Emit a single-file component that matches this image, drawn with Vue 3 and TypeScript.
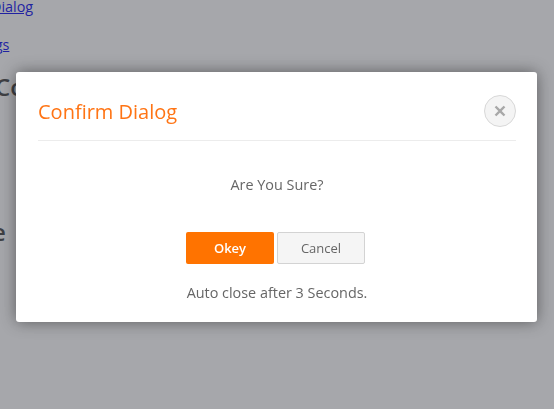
<script setup lang="ts">
const title = 'Confirm Dialog'
const message = 'Are You Sure?'
const note = 'Auto close after 3 Seconds.'
</script>

<template>
  <div class="page">
    <a class="link first" href="#">Confirm Dialog</a>
    <a class="link second" href="#">Settings</a>
    <h2 class="heading h-one">Confirm</h2>
    <h2 class="heading h-two">Dialogue</h2>
  </div>
  <div class="overlay">
    <section class="dialog">
      <header class="head">
        <h3 class="title">{{ title }}</h3>
        <button class="close" type="button" aria-label="Close">
          <svg width="14" height="14" viewBox="0 0 14 14">
            <path d="M2.5 2.5 11.5 11.5M11.5 2.5 2.5 11.5" stroke="#a8a8a8" stroke-width="2.4" fill="none" />
          </svg>
        </button>
      </header>
      <p class="message">{{ message }}</p>
      <div class="actions">
        <button class="btn okey" type="button">Okey</button>
        <button class="btn cancel" type="button">Cancel</button>
      </div>
      <p class="note">{{ note }}</p>
    </section>
  </div>
</template>

<style>
html, body { margin: 0; padding: 0; background: #fff; overflow: hidden; }
</style>

<style scoped>
.page {
  height: 409px;
  overflow: hidden;
  display: flex;
  flex-direction: column;
  align-items: flex-start;
  font-family: "Open Sans", sans-serif;
}
.link {
  font-size: 14.4px;
  line-height: 19px;
  color: #0000ee;
  text-decoration: underline;
}
.first { margin: -3px 0 0 -67px; }
.second { margin: 19px 0 0 -44px; }
.heading {
  margin: 0;
  font-size: 24px;
  font-weight: 600;
  line-height: 32px;
  color: #3a3a3a;
}
.h-one { margin: 17px 0 0 -5px; }
.h-two { margin: 113px 0 0 -96px; }
.overlay {
  position: fixed;
  inset: 0;
  background: rgba(70, 72, 80, 0.48);
  display: flex;
  justify-content: flex-start;
  align-items: flex-start;
  padding: 72px 0 0 16px;
  font-family: "Open Sans", sans-serif;
}
.dialog {
  box-sizing: border-box;
  width: 521px;
  height: 250px;
  padding: 0 21px 0 22px;
  background: #fff;
  border-radius: 3px;
  box-shadow: 0 0 16px rgba(0, 0, 0, 0.45);
  display: flex;
  flex-direction: column;
  align-items: center;
}
.head {
  box-sizing: border-box;
  align-self: stretch;
  height: 69px;
  border-bottom: 1px solid #ececec;
  display: flex;
  justify-content: space-between;
  align-items: center;
  padding-top: 19px;
  padding-bottom: 9px;
}
.title {
  margin: 0;
  font-size: 20px;
  font-weight: 400;
  color: #ff7414;
}
.close {
  box-sizing: border-box;
  width: 32px;
  height: 32px;
  padding: 0;
  border: 1px solid #d8d8d8;
  border-radius: 50%;
  background: #f4f4f4;
  display: flex;
  align-items: center;
  justify-content: center;
}
.message {
  margin: 34px 0 0;
  font-size: 14.4px;
  line-height: 20px;
  color: #666;
}
.actions {
  margin: 37px 3px 0 0;
  display: flex;
  gap: 3px;
}
.btn {
  box-sizing: border-box;
  width: 88px;
  height: 32px;
  border-radius: 2px;
  font-family: inherit;
  font-size: 13px;
  padding: 0;
}
.okey {
  border: 0;
  background: #ff7300;
  color: #fff;
  font-weight: 600;
}
.cancel {
  border: 1px solid #d3d3d3;
  background: #f5f5f5;
  color: #666;
}
.note {
  margin: 19px 0 0;
  font-size: 14.4px;
  line-height: 20px;
  color: #666;
}
</style>
